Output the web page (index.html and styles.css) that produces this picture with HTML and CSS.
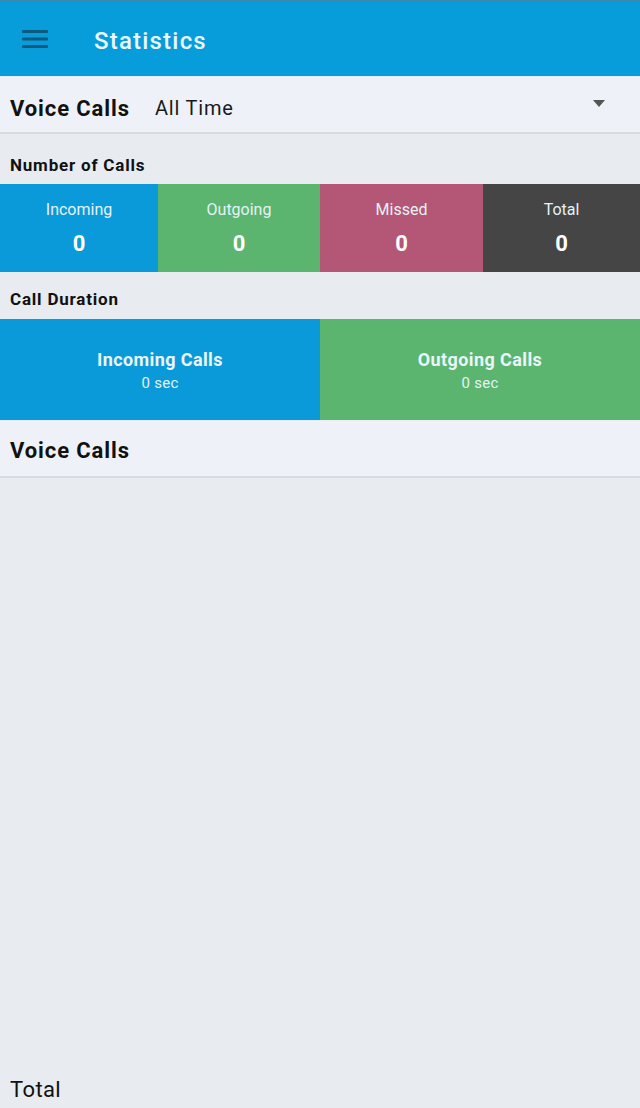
FILE: index.html
```html
<!DOCTYPE html>
<html>
<head>
<meta charset="utf-8">
<link rel="stylesheet" href="styles.css">
</head>
<body>
<div class="app">
  <header class="topbar">
    <svg class="menu" width="26" height="18" viewBox="0 0 26 18"><rect x="0" y="0" width="26" height="3" rx="1"/><rect x="0" y="7.5" width="26" height="3" rx="1"/><rect x="0" y="15" width="26" height="3" rx="1"/></svg>
    <span class="title">Statistics</span>
  </header>
  <div class="filterbar">
    <span class="filter-title">Voice Calls</span>
    <span class="filter-value">All Time</span>
    <span class="caret"></span>
  </div>
  <div class="section-label first">Number of Calls</div>
  <div class="count-grid">
    <div class="tile blue"><div class="tile-label">Incoming</div><div class="tile-value">0</div></div>
    <div class="tile green"><div class="tile-label">Outgoing</div><div class="tile-value">0</div></div>
    <div class="tile pink"><div class="tile-label">Missed</div><div class="tile-value">0</div></div>
    <div class="tile dark"><div class="tile-label">Total</div><div class="tile-value">0</div></div>
  </div>
  <div class="section-label second">Call Duration</div>
  <div class="duration-grid">
    <div class="dtile blue"><div class="dtile-label">Incoming Calls</div><div class="dtile-value">0 sec</div></div>
    <div class="dtile green"><div class="dtile-label">Outgoing Calls</div><div class="dtile-value">0 sec</div></div>
  </div>
  <div class="listbar">Voice Calls</div>
  <div class="spacer"></div>
  <div class="footer-total">Total</div>
</div>
</body>
</html>
```
FILE: styles.css
```css
html, body {
  margin: 0;
  padding: 0;
  background: #e8ebf0;
  font-family: Roboto, "Liberation Sans", sans-serif;
}
.app {
  width: 640px;
  height: 1108px;
  display: flex;
  flex-direction: column;
}
.topbar {
  height: 76px;
  flex: none;
  box-sizing: border-box;
  background: #079ddb;
  border-top: 2px solid #3d88b0;
  display: flex;
  align-items: center;
  padding-left: 22px;
  padding-top: 3px;
}
.menu {
  fill: #0d5a80;
  margin-top: -4px;
}
.title {
  color: #eaf7fe;
  font-size: 24px;
  font-weight: 500;
  margin-left: 46px;
  letter-spacing: 1.2px;
}
.filterbar {
  height: 57px;
  flex: none;
  margin-top: 1px;
  box-sizing: border-box;
  background: #eef1f8;
  border-bottom: 2px solid #d8dbe0;
  display: flex;
  align-items: center;
  padding: 7px 10px 0;
}
.filter-title {
  font-size: 22px;
  font-weight: 700;
  color: #111;
  letter-spacing: 0.9px;
}
.filter-value {
  font-size: 20px;
  color: #1a1a1a;
  margin-left: 25px;
  flex: 1;
  letter-spacing: 0.8px;
}
.caret {
  width: 0;
  height: 0;
  border-left: 6.5px solid transparent;
  border-right: 6.5px solid transparent;
  border-top: 7px solid #555;
  margin-right: 25px;
  margin-top: -9px;
}
.section-label {
  font-size: 17px;
  font-weight: 700;
  color: #111;
  padding-left: 10px;
  box-sizing: border-box;
  flex: none;
  letter-spacing: 0.8px;
}
.section-label.first {
  height: 50px;
  padding-top: 21px;
}
.section-label.second {
  height: 47px;
  padding-top: 17px;
}
.count-grid {
  display: grid;
  grid-template-columns: 158px 162px 163px 157px;
  height: 88px;
  flex: none;
}
.tile {
  display: flex;
  flex-direction: column;
  align-items: center;
  padding-top: 16px;
  box-sizing: border-box;
}
.tile-label {
  font-size: 16px;
  color: #e4f2f7;
}
.tile-value {
  font-size: 22px;
  font-weight: 700;
  color: #fff;
  margin-top: 12px;
}
.blue { background: #0a9ad9; }
.green { background: #5bb56f; }
.pink { background: #b45676; }
.dark { background: #454545; }
.duration-grid {
  display: grid;
  grid-template-columns: 320px 320px;
  height: 101px;
  flex: none;
}
.dtile {
  display: flex;
  flex-direction: column;
  align-items: center;
  padding-top: 30px;
  box-sizing: border-box;
}
.dtile-label {
  font-size: 18px;
  font-weight: 700;
  color: #eaf6fa;
  letter-spacing: 0.4px;
}
.dtile-value {
  font-size: 15px;
  color: #e4f2f7;
  margin-top: 4px;
  letter-spacing: 0.3px;
}
.listbar {
  height: 57px;
  flex: none;
  margin-top: 1px;
  background: #eef1f8;
  border-bottom: 2px solid #d8dbe0;
  box-sizing: border-box;
  display: flex;
  align-items: center;
  padding-left: 10px;
  padding-top: 4px;
  font-size: 22px;
  font-weight: 700;
  color: #111;
  letter-spacing: 0.9px;
}
.spacer { flex: 1; }
.footer-total {
  font-size: 22px;
  color: #111;
  padding-left: 10px;
  height: 31px;
  flex: none;
  letter-spacing: 0.4px;
}
```
